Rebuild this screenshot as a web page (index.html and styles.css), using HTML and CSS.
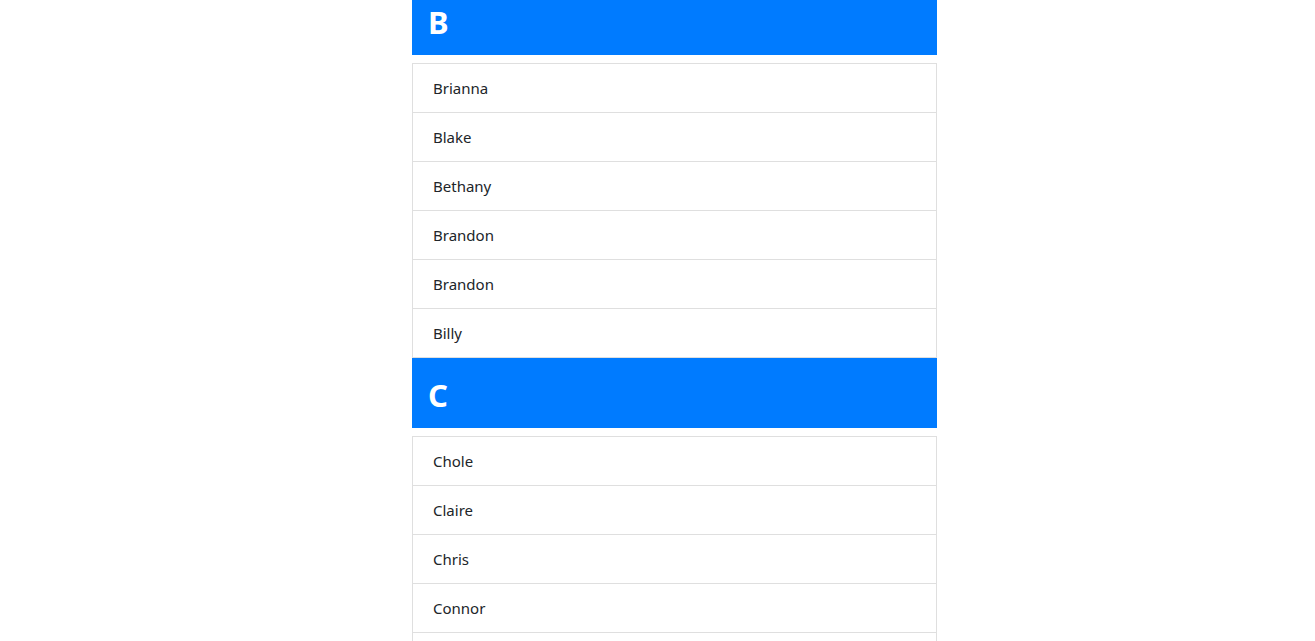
FILE: index.html
```html
<!DOCTYPE html>
<html>
<head>
<meta charset="utf-8">
<link rel="stylesheet" href="styles.css">
</head>
<body>
<main class="page">
  <section class="group">
    <h2 class="group-head">B</h2>
    <ul class="list">
      <li class="item">Brianna</li>
      <li class="item">Blake</li>
      <li class="item">Bethany</li>
      <li class="item">Brandon</li>
      <li class="item">Brandon</li>
      <li class="item">Billy</li>
    </ul>
  </section>
  <section class="group">
    <h2 class="group-head">C</h2>
    <ul class="list">
      <li class="item">Chole</li>
      <li class="item">Claire</li>
      <li class="item">Chris</li>
      <li class="item">Connor</li>
      <li class="item">Caleb</li>
    </ul>
  </section>
</main>
</body>
</html>
```

FILE: styles.css
```css
html, body {
  margin: 0;
  padding: 0;
  background: #fff;
  overflow: hidden;
}
body {
  font-family: "Noto Sans", "Open Sans", sans-serif;
  font-size: 15px;
  color: #212529;
}
.page {
  width: 525px;
  margin: -15px 0 0 412px;
}
.group-head {
  margin: 0 0 8px 0;
  background: #007bff;
  color: #fff;
  font-size: 31px;
  font-weight: 700;
  line-height: 38px;
  height: 70px;
  box-sizing: border-box;
  padding: 18px 16px 14px;
}
.list {
  list-style: none;
  margin: 0;
  padding: 0;
}
.item {
  border: 1px solid #dfdfdf;
  margin-bottom: -1px;
  padding: 12px 20px;
  line-height: 24px;
  height: 24px;
}
.list .item:last-child {
  margin-bottom: 0;
}
```
